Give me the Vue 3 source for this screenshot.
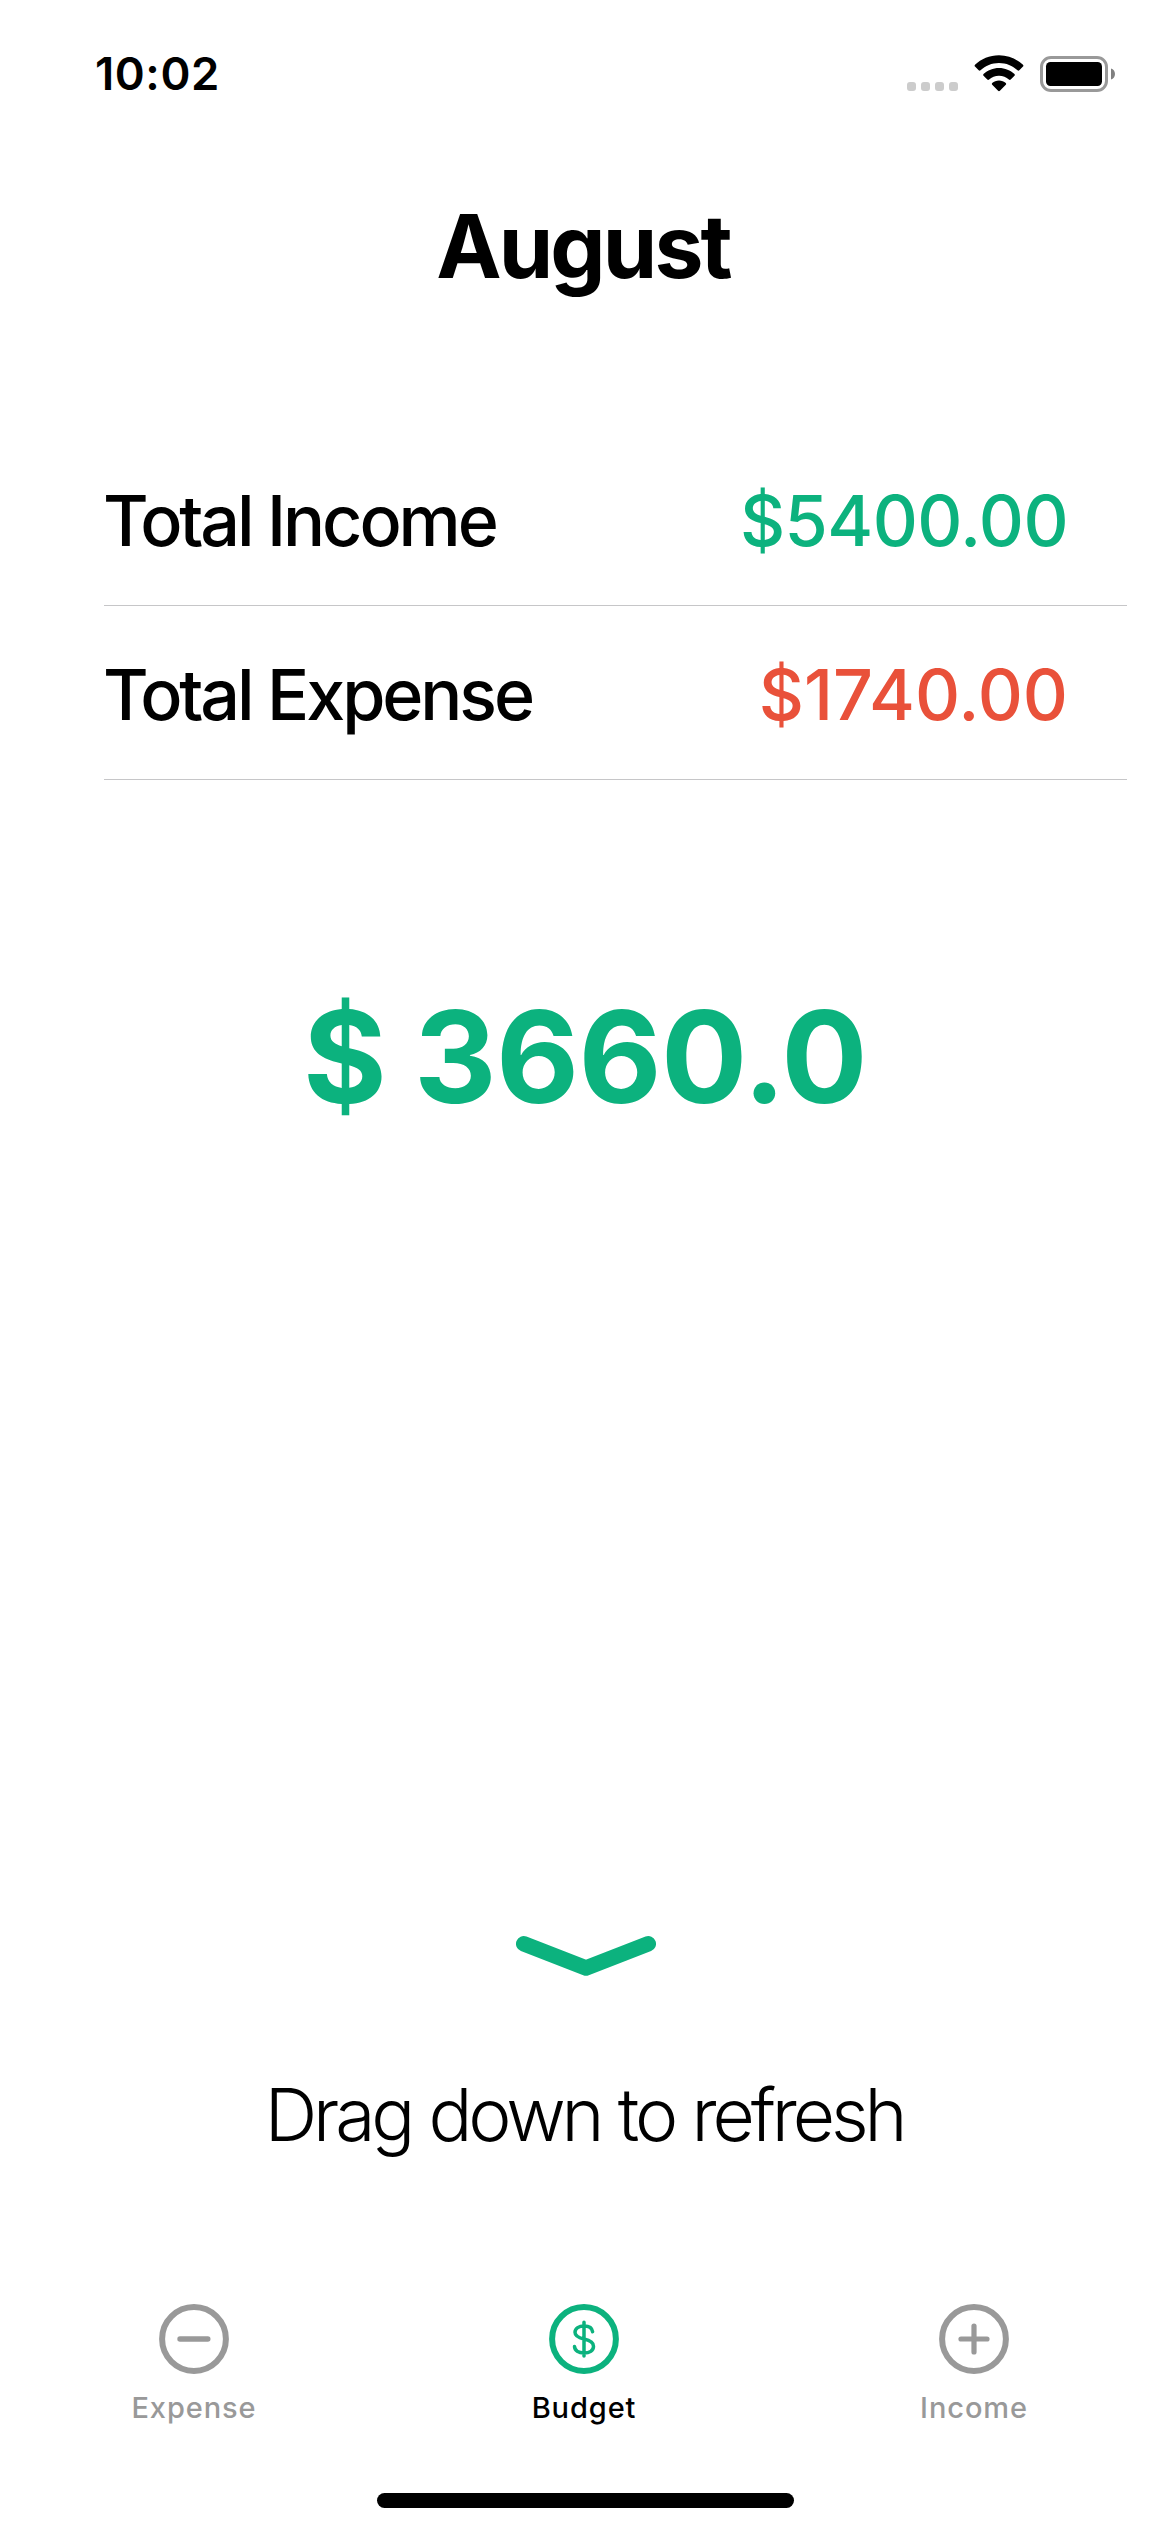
<script setup>
import { ref } from 'vue'

const rows = [
  { label: 'Total Income', amount: '$5400.00', kind: 'income' },
  { label: 'Total Expense', amount: '$1740.00', kind: 'expense' },
]
const tabs = [
  { id: 'minus', label: 'Expense' },
  { id: 'dollar', label: 'Budget' },
  { id: 'plus', label: 'Income' },
]
const active = ref('dollar')
</script>

<template>
  <div class="screen">
    <header class="status">
      <span class="time">10:02</span>
      <div class="indicators">
        <div class="dots"><i v-for="n in 4" :key="n"></i></div>
        <svg class="wifi" width="50" height="37" viewBox="0 0 50 37">
          <path d="M25 0.3C34.5 0.3 42.8 4 49 9.8Q49.8 10.7 49 11.6L45.3 15.3Q44.4 16.1 43.5 15.3C38.5 10.8 32.2 8 25 8S11.5 10.8 6.5 15.3Q5.6 16.1 4.7 15.3L1 11.6Q0.2 10.7 1 9.8C7.2 4 15.5 0.3 25 0.3Z" />
          <path d="M25 12.9C31 12.9 36.4 15.2 40.5 19Q41.3 19.9 40.5 20.8L36.7 24.5Q35.8 25.3 34.9 24.5C32.3 22.2 28.9 20.7 25 20.7S17.7 22.2 15.1 24.5Q14.2 25.3 13.3 24.5L9.5 20.8Q8.7 19.9 9.5 19C13.6 15.2 19 12.9 25 12.9Z" />
          <path d="M25 25.5C27.7 25.5 30 26.4 31.8 28Q32.7 28.9 31.8 29.8L25.9 35.8Q25 36.6 24.1 35.8L18.2 29.8Q17.3 28.9 18.2 28C20 26.4 22.3 25.5 25 25.5Z" />
        </svg>
        <svg class="battery" width="76" height="36" viewBox="0 0 76 36">
          <rect x="1.5" y="1.5" width="65" height="33" rx="9.5" fill="none" stroke="#999" stroke-width="3" />
          <rect x="6" y="6" width="56" height="24" rx="4.5" fill="#000" />
          <path d="M71 12.5C73.500 13.300 75 15.500 75 18S73.500 22.700 71 23.500Z" fill="#808080" />
        </svg>
      </div>
    </header>

    <h1 class="month">August</h1>

    <section class="totals">
      <div v-for="r in rows" :key="r.kind" class="row">
        <span class="label">{{ r.label }}</span>
        <span class="amount" :class="r.kind">{{ r.amount }}</span>
      </div>
    </section>

    <p class="balance">$ 3660.0</p>

    <div class="refresh">
      <svg width="140" height="40" viewBox="0 0 140 40">
        <path d="M7.700 7.800L70 32L132.300 7.800" fill="none" stroke="#0cb27e" stroke-width="15.400" stroke-linecap="round" stroke-linejoin="round" />
      </svg>
      <p>Drag down to refresh</p>
    </div>

    <nav class="tabs">
      <div v-for="t in tabs" :key="t.id" class="tab" :class="{ active: active === t.id }">
        <svg width="70" height="70" viewBox="0 0 70 70" fill="none" stroke="currentColor" stroke-linecap="round" stroke-linejoin="round">
          <circle cx="35" cy="35" r="31.900" stroke-width="6" />
          <path v-if="t.id === 'minus'" d="M21 35H48.800" stroke-width="5.400" />
          <path v-else-if="t.id === 'plus'" d="M22 35H48M35 22V48" stroke-width="5.200" />
          <path v-else d="M35 18.300V52M43.600 27.800C43.200 24.200 40 21.900 35 21.900S26 24.400 26 28.200C26 32.200 29.600 33.800 35 35S44.500 37.900 44.500 42.200S40.500 49 35 49S25.800 46.500 25.500 42.500" stroke-width="3.500" />
        </svg>
        <span>{{ t.label }}</span>
      </div>
    </nav>

    <div class="home"></div>
  </div>
</template>

<style>
body {
  background: #fff;
}
</style>

<style scoped>
.screen {
  width: 1170px;
  height: 2532px;
  display: flex;
  flex-direction: column;
  overflow: hidden;
  background: #fff;
  color: #000;
  font-family: Inter, "Liberation Sans", sans-serif;
}
h1,
p {
  margin: 0;
}
.status {
  flex: none;
  height: 147px;
  margin-bottom: 46px;
  padding: 46px 54px 0 95px;
  box-sizing: border-box;
  display: flex;
  justify-content: space-between;
  align-items: flex-start;
}
.time {
  font-size: 45.5px;
  line-height: 56px;
  font-weight: 600;
  letter-spacing: 0.55px;
}
.indicators {
  display: flex;
  align-items: flex-start;
  padding-top: 9px;
}
.dots {
  display: flex;
  gap: 5px;
  margin: 27px 16px 0 0;
}
.dots i {
  width: 9px;
  height: 9px;
  border-radius: 3px;
  background: #ccc;
}
.battery {
  margin: 1px 0 0 16px;
}
.month {
  height: 106px;
  padding-right: 4px;
  font-size: 87.6px;
  line-height: 106px;
  font-weight: 700;
  letter-spacing: -2.9px;
  text-align: center;
}
.totals {
  margin: 133px 43px 0 104px;
}
.row {
  height: 174px;
  padding: 4px 59px 0 0;
  box-sizing: border-box;
  border-bottom: 1px solid #c6c6c8;
  display: flex;
  justify-content: space-between;
  align-items: center;
  font-size: 70px;
  line-height: 90px;
  font-weight: 500;
}
.label {
  margin-left: -1px;
  letter-spacing: -3.1px;
}
.income {
  color: #0cb27e;
  letter-spacing: -0.57px;
}
.expense {
  color: #e9513a;
}
.balance {
  margin-top: 197px;
  height: 160px;
  font-size: 128px;
  line-height: 160px;
  font-weight: 700;
  letter-spacing: -0.6px;
  word-spacing: -2px;
  text-align: center;
  color: #0cb27e;
}
.refresh {
  margin-top: auto;
  padding-bottom: 145px;
  display: flex;
  flex-direction: column;
  align-items: center;
}
.refresh svg {
  margin-left: 2px;
}
.refresh p {
  margin-top: 95px;
  padding-right: 2px;
  font-size: 73px;
  line-height: 88px;
  font-weight: 300;
  letter-spacing: -4.1px;
  word-spacing: 1px;
}
.tabs {
  flex: none;
  height: 189px;
  margin: 0 1px 0 -1px;
  display: flex;
}
.tab {
  flex: 1;
  display: flex;
  flex-direction: column;
  align-items: center;
  color: #999;
}
.tab.active {
  color: #0cb27e;
}
.tab span {
  margin-top: 16px;
  font-size: 29px;
  line-height: 36px;
  font-weight: 500;
  letter-spacing: 0.9px;
}
.tab.active span {
  color: #000;
}
.home {
  flex: none;
  width: 417px;
  height: 15px;
  margin: 0 auto 24px;
  border-radius: 8px;
  background: #000;
}
</style>
